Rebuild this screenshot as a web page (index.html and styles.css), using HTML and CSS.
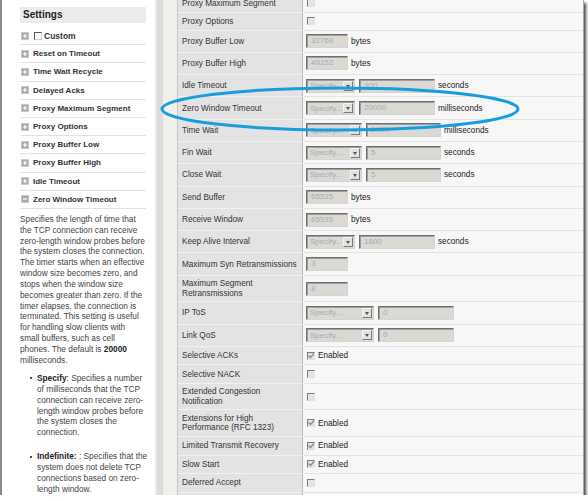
FILE: index.html
```html
<!DOCTYPE html>
<html>
<head>
<meta charset="utf-8">
<link rel="stylesheet" href="styles.css">
</head>
<body>
<div class="shot">
  <aside class="side">
    <div class="side-head">Settings</div>
    <ul class="acc">
      <li class="acc-item"><span class="tog"><svg viewBox="0 0 8 8" width="8" height="8"><rect x="0.5" y="0.5" width="7" height="7" fill="#a9a9a9" stroke="#c9c9c9"/><path d="M4 2v4M2 4h4" stroke="#fff" stroke-width="1.2"/></svg></span><span class="cb-white"></span><span class="custom">Custom</span></li>
      <li class="acc-item"><span class="tog"><svg viewBox="0 0 8 8" width="8" height="8"><rect x="0.5" y="0.5" width="7" height="7" fill="#a9a9a9" stroke="#c9c9c9"/><path d="M4 2v4M2 4h4" stroke="#fff" stroke-width="1.2"/></svg></span>Reset on Timeout</li>
      <li class="acc-item"><span class="tog"><svg viewBox="0 0 8 8" width="8" height="8"><rect x="0.5" y="0.5" width="7" height="7" fill="#a9a9a9" stroke="#c9c9c9"/><path d="M4 2v4M2 4h4" stroke="#fff" stroke-width="1.2"/></svg></span>Time Wait Recycle</li>
      <li class="acc-item"><span class="tog"><svg viewBox="0 0 8 8" width="8" height="8"><rect x="0.5" y="0.5" width="7" height="7" fill="#a9a9a9" stroke="#c9c9c9"/><path d="M4 2v4M2 4h4" stroke="#fff" stroke-width="1.2"/></svg></span>Delayed Acks</li>
      <li class="acc-item"><span class="tog"><svg viewBox="0 0 8 8" width="8" height="8"><rect x="0.5" y="0.5" width="7" height="7" fill="#a9a9a9" stroke="#c9c9c9"/><path d="M4 2v4M2 4h4" stroke="#fff" stroke-width="1.2"/></svg></span>Proxy Maximum Segment</li>
      <li class="acc-item"><span class="tog"><svg viewBox="0 0 8 8" width="8" height="8"><rect x="0.5" y="0.5" width="7" height="7" fill="#a9a9a9" stroke="#c9c9c9"/><path d="M4 2v4M2 4h4" stroke="#fff" stroke-width="1.2"/></svg></span>Proxy Options</li>
      <li class="acc-item"><span class="tog"><svg viewBox="0 0 8 8" width="8" height="8"><rect x="0.5" y="0.5" width="7" height="7" fill="#a9a9a9" stroke="#c9c9c9"/><path d="M4 2v4M2 4h4" stroke="#fff" stroke-width="1.2"/></svg></span>Proxy Buffer Low</li>
      <li class="acc-item"><span class="tog"><svg viewBox="0 0 8 8" width="8" height="8"><rect x="0.5" y="0.5" width="7" height="7" fill="#a9a9a9" stroke="#c9c9c9"/><path d="M4 2v4M2 4h4" stroke="#fff" stroke-width="1.2"/></svg></span>Proxy Buffer High</li>
      <li class="acc-item"><span class="tog"><svg viewBox="0 0 8 8" width="8" height="8"><rect x="0.5" y="0.5" width="7" height="7" fill="#a9a9a9" stroke="#c9c9c9"/><path d="M4 2v4M2 4h4" stroke="#fff" stroke-width="1.2"/></svg></span>Idle Timeout</li>
      <li class="acc-item"><span class="tog"><svg viewBox="0 0 8 8" width="8" height="8"><rect x="0.5" y="0.5" width="7" height="7" fill="#a9a9a9" stroke="#c9c9c9"/><path d="M2 4h4" stroke="#fff" stroke-width="1.2"/></svg></span>Zero Window Timeout</li>
    </ul>
    <div class="desc">
      <p>Specifies the length of time that<br>the TCP connection can receive<br>zero-length window probes before<br>the system closes the connection.<br>The timer starts when an effective<br>window size becomes zero, and<br>stops when the window size<br>becomes greater than zero. If the<br>timer elapses, the connection is<br>terminated. This setting is useful<br>for handling slow clients with<br>small buffers, such as cell<br>phones. The default is <b>20000</b><br>milliseconds.</p>
      <ul class="bul">
        <li><b>Specify</b>: Specifies a number<br>of milliseconds that the TCP<br>connection can receive zero-<br>length window probes before<br>the system closes the<br>connection.</li>
        <li><b>Indefinite:</b> : Specifies that the<br>system does not delete TCP<br>connections based on zero-<br>length window.</li>
      </ul>
    </div>
  </aside>
  <div class="split"></div>
  <div class="gutter"></div>
  <main class="grid">
    <div class="row h-cb first"><div class="lab">Proxy Maximum Segment</div><div class="val"><span class="cb"></span></div></div>
    <div class="row h-po"><div class="lab">Proxy Options</div><div class="val"><span class="cb"></span></div></div>
    <div class="row h-in"><div class="lab">Proxy Buffer Low</div><div class="val"><span class="tx w42">32768</span><span class="unit">bytes</span></div></div>
    <div class="row h-in"><div class="lab">Proxy Buffer High</div><div class="val"><span class="tx w42">49152</span><span class="unit">bytes</span></div></div>
    <div class="row h-in"><div class="lab">Idle Timeout</div><div class="val"><span class="sel w49"><span class="opt">Specify...</span><i class="btn"></i></span><span class="tx w76">300</span><span class="unit">seconds</span></div></div>
    <div class="row h-in"><div class="lab">Zero Window Timeout</div><div class="val"><span class="sel w49"><span class="opt">Specify...</span><i class="btn"></i></span><span class="tx w76">20000</span><span class="unit">milliseconds</span></div></div>
    <div class="row h-in"><div class="lab">Time Wait</div><div class="val"><span class="sel w56"><span class="opt">Specify...</span><i class="btn"></i></span><span class="tx w75">2000</span><span class="unit">milliseconds</span></div></div>
    <div class="row h-in"><div class="lab">Fin Wait</div><div class="val"><span class="sel w56"><span class="opt">Specify...</span><i class="btn"></i></span><span class="tx w75">5</span><span class="unit">seconds</span></div></div>
    <div class="row h-in"><div class="lab">Close Wait</div><div class="val"><span class="sel w56"><span class="opt">Specify...</span><i class="btn"></i></span><span class="tx w75">5</span><span class="unit">seconds</span></div></div>
    <div class="row h-in"><div class="lab">Send Buffer</div><div class="val"><span class="tx w42">65535</span><span class="unit">bytes</span></div></div>
    <div class="row h-in"><div class="lab">Receive Window</div><div class="val"><span class="tx w42">65535</span><span class="unit">bytes</span></div></div>
    <div class="row h-in"><div class="lab">Keep Alive Interval</div><div class="val"><span class="sel w49"><span class="opt">Specify...</span><i class="btn"></i></span><span class="tx w76">1800</span><span class="unit">seconds</span></div></div>
    <div class="row h-in"><div class="lab">Maximum Syn Retransmissions</div><div class="val"><span class="tx w42">3</span></div></div>
    <div class="row h-2"><div class="lab two">Maximum Segment<br>Retransmissions</div><div class="val"><span class="tx w42">8</span></div></div>
    <div class="row h-in"><div class="lab">IP ToS</div><div class="val"><span class="sel w68"><span class="opt">Specify...</span><i class="btn"></i></span><span class="tx w76">0</span></div></div>
    <div class="row h-in"><div class="lab">Link QoS</div><div class="val"><span class="sel w68"><span class="opt">Specify...</span><i class="btn"></i></span><span class="tx w76">0</span></div></div>
    <div class="row h-cb"><div class="lab">Selective ACKs</div><div class="val"><span class="cb on"><svg viewBox="0 0 8 8" width="8" height="8"><path d="M1.5 3.5l2 2 3.5-4" fill="none" stroke="#8a8a8a" stroke-width="1.3"/></svg></span><span class="en">Enabled</span></div></div>
    <div class="row h-cb"><div class="lab">Selective NACK</div><div class="val"><span class="cb"></span></div></div>
    <div class="row h-2"><div class="lab two">Extended Congestion<br>Notification</div><div class="val"><span class="cb"></span></div></div>
    <div class="row h-2b"><div class="lab two">Extensions for High<br>Performance (RFC 1323)</div><div class="val"><span class="cb on"><svg viewBox="0 0 8 8" width="8" height="8"><path d="M1.5 3.5l2 2 3.5-4" fill="none" stroke="#8a8a8a" stroke-width="1.3"/></svg></span><span class="en">Enabled</span></div></div>
    <div class="row h-cb"><div class="lab">Limited Transmit Recovery</div><div class="val"><span class="cb on"><svg viewBox="0 0 8 8" width="8" height="8"><path d="M1.5 3.5l2 2 3.5-4" fill="none" stroke="#8a8a8a" stroke-width="1.3"/></svg></span><span class="en">Enabled</span></div></div>
    <div class="row h-cb"><div class="lab">Slow Start</div><div class="val"><span class="cb on"><svg viewBox="0 0 8 8" width="8" height="8"><path d="M1.5 3.5l2 2 3.5-4" fill="none" stroke="#8a8a8a" stroke-width="1.3"/></svg></span><span class="en">Enabled</span></div></div>
    <div class="row h-cb"><div class="lab">Deferred Accept</div><div class="val"><span class="cb"></span></div></div>
    <div class="row h-cb"><div class="lab"></div><div class="val"><span class="cb"></span></div></div>
  </main>
  <svg class="mark" width="588" height="501" viewBox="0 0 588 501"><ellipse cx="340" cy="109" rx="178" ry="21" fill="none" stroke="#189ddf" stroke-width="3"/></svg>
</div>
</body>
</html>
```

FILE: styles.css
```css
* { box-sizing: border-box; }
body {
  margin: 0;
  background: #fff;
  font-family: "Liberation Sans", Arial, sans-serif;
}
.shot {
  position: relative;
  width: 584px;
  height: 495px;
  border-left: 2px solid #8b8b8b;
  border-right: 1px solid #a8a8a8;
  box-shadow: 2px 3px 3px rgba(0, 0, 0, 0.75);
  display: flex;
  overflow: hidden;
  background: #f1efeb;
}
.side {
  flex: none;
  width: 153px;
  background: #fff;
  padding: 7px 7px 0 18px;
}
.side-head {
  height: 16px;
  background: #ececec;
  font-weight: bold;
  font-size: 10px;
  line-height: 16px;
  padding-left: 3px;
  color: #222;
  margin-bottom: 4px;
  width: 126px;
}
.acc {
  list-style: none;
  margin: 0;
  padding: 0;
  width: 126px;
}
.acc-item {
  height: 18.2px;
  border-bottom: 1px solid #e1e1e1;
  display: flex;
  align-items: center;
  font-weight: bold;
  font-size: 8px;
  color: #333;
  white-space: nowrap;
}
.tog {
  display: block;
  width: 8px;
  height: 8px;
  margin-left: 1px;
  margin-right: 4px;
}
.tog svg { display: block; }
.cb-white {
  width: 8px;
  height: 8px;
  border: 1px solid #555;
  border-right-color: #ccc;
  border-bottom-color: #ccc;
  background: #fff;
  margin-left: 1px;
  margin-right: 2px;
}
.custom { font-size: 8.5px; }
.desc {
  font-size: 8.3px;
  line-height: 10.85px;
  color: #444;
  margin-top: 5px;
  white-space: nowrap;
}
.desc p { margin: 0; }
.desc b { color: #222; }
.bul {
  margin: 7.3px 0 0;
  padding-left: 17px;
  list-style: none;
}
.bul li {
  margin-bottom: 13.3px;
  position: relative;
}
.bul li::before {
  content: "";
  position: absolute;
  left: -7px;
  top: 4.5px;
  width: 2px;
  height: 2px;
  background: #555;
}
.split {
  flex: none;
  width: 8px;
  background: #dcdcdc;
  border-left: 2px solid #ebebeb;
}
.gutter {
  flex: none;
  width: 14px;
  background: #f1efeb;
}
.grid {
  flex: none;
  width: 406px;
  border-left: 1px solid #c6c6c6;
  margin-top: -5.3px;
  align-self: flex-start;
}
.row { display: flex; }
.h-cb { height: 18.5px; }
.h-po { height: 17.3px; }
.h-in { height: 22.3px; }
.h-2 { height: 26.5px; }
.h-2b { height: 26.7px; }
.lab {
  flex: none;
  width: 125px;
  background: #e3e3e3;
  border-bottom: 1px solid #f2f2f2;
  border-right: 1px solid #bdbdbd;
  padding-left: 4px;
  font-size: 8.2px;
  color: #333;
  display: flex;
  align-items: center;
  white-space: nowrap;
}
.lab.two { line-height: 9.6px; }
.val {
  flex: 1;
  background: #f7f7f7;
  border-bottom: 1px solid #e4e4e4;
  padding-left: 3px;
  display: flex;
  align-items: center;
  font-size: 8.2px;
  color: #222;
}
.tx {
  display: block;
  height: 14px;
  border: 1px solid;
  border-color: #6f6f6f #d6d4d0 #d6d4d0 #6f6f6f;
  box-shadow: inset 1px 1px 0 #9d9d9d;
  background: #dbd9d4;
  color: #ababab;
  font-size: 8px;
  line-height: 12px;
  padding-left: 4px;
}
.w42 { width: 42px; }
.w75 { width: 75px; }
.w76 { width: 76px; }
.sel {
  display: flex;
  align-items: center;
  justify-content: space-between;
  height: 14px;
  border: 1px solid;
  border-color: #6f6f6f #d6d4d0 #d6d4d0 #6f6f6f;
  box-shadow: inset 1px 1px 0 #9d9d9d;
  background: #dbd9d4;
  margin-right: 4px;
  padding-left: 3px;
  padding-right: 1px;
}
.w49 { width: 49px; }
.w56 { width: 56px; }
.w68 { width: 68px; }
.opt {
  color: #ababab;
  font-size: 8px;
  white-space: nowrap;
  overflow: hidden;
}
.btn {
  flex: none;
  position: relative;
  width: 10px;
  height: 10px;
  background: #e4e2de;
  border: 1px solid;
  border-color: #f4f4f4 #7a7a7a #7a7a7a #f4f4f4;
}
.btn::after {
  content: "";
  position: absolute;
  left: 2px;
  top: 3px;
  border-left: 2.5px solid transparent;
  border-right: 2.5px solid transparent;
  border-top: 3px solid #555;
}
.unit { margin-left: 3px; white-space: nowrap; }
.cb {
  display: block;
  width: 8px;
  height: 8px;
  border: 1px solid;
  border-color: #7d7d7d #e2e2e2 #e2e2e2 #7d7d7d;
  background: #e6e4e0;
  margin-left: 1px;
  position: relative;
}
.cb svg {
  position: absolute;
  left: -1px;
  top: -1px;
}
.en { margin-left: 3px; }
.mark {
  position: absolute;
  left: -2px;
  top: 0;
  pointer-events: none;
}
```
